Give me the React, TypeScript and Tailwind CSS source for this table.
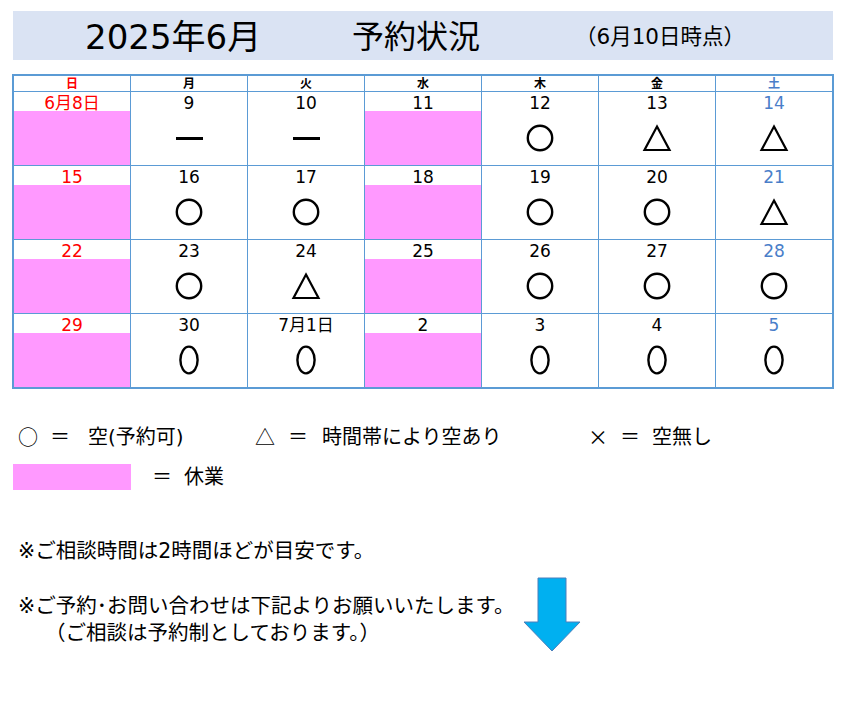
import React from "react";

type Sym = "o" | "t" | "d" | "oo" | "";
type Cell = { label: string; sym: Sym; closed?: boolean };

const weeks: Cell[][] = [
  [
    { label: "6月8日", sym: "", closed: true },
    { label: "9", sym: "d" },
    { label: "10", sym: "d" },
    { label: "11", sym: "", closed: true },
    { label: "12", sym: "o" },
    { label: "13", sym: "t" },
    { label: "14", sym: "t" },
  ],
  [
    { label: "15", sym: "", closed: true },
    { label: "16", sym: "o" },
    { label: "17", sym: "o" },
    { label: "18", sym: "", closed: true },
    { label: "19", sym: "o" },
    { label: "20", sym: "o" },
    { label: "21", sym: "t" },
  ],
  [
    { label: "22", sym: "", closed: true },
    { label: "23", sym: "o" },
    { label: "24", sym: "t" },
    { label: "25", sym: "", closed: true },
    { label: "26", sym: "o" },
    { label: "27", sym: "o" },
    { label: "28", sym: "o" },
  ],
  [
    { label: "29", sym: "", closed: true },
    { label: "30", sym: "oo" },
    { label: "7月1日", sym: "oo" },
    { label: "2", sym: "", closed: true },
    { label: "3", sym: "oo" },
    { label: "4", sym: "oo" },
    { label: "5", sym: "oo" },
  ],
];

const days = ["日", "月", "火", "水", "木", "金", "土"];

function Symbol({ s }: { s: Sym }) {
  if (s === "o")
    return (
      <svg width="30" height="30" viewBox="0 0 30 30">
        <circle cx="15" cy="15" r="12.2" fill="none" stroke="#000" strokeWidth="2.4" />
      </svg>
    );
  if (s === "oo")
    return (
      <svg width="24" height="32" viewBox="0 0 24 32">
        <ellipse cx="12" cy="16" rx="8.6" ry="13.4" fill="none" stroke="#000" strokeWidth="2.4" />
      </svg>
    );
  if (s === "t")
    return (
      <svg width="30" height="30" viewBox="0 0 30 30">
        <path d="M15 3.5 L27.5 27 L2.5 27 Z" fill="none" stroke="#000" strokeWidth="2.2" strokeLinejoin="miter" />
      </svg>
    );
  if (s === "d") return <div className="w-[27px] h-[3px] bg-black" />;
  return null;
}

function colorFor(i: number) {
  if (i === 0) return "text-[#ff0000]";
  if (i === 6) return "text-[#4a7ec9]";
  return "text-black";
}

const cjk = { fontFamily: '"Noto Sans CJK JP", sans-serif' };

export default function App() {
  const font = { fontFamily: '"DejaVu Sans", "Noto Sans CJK JP", sans-serif' };
  return (
    <div className="w-[844px] h-[713px] bg-white relative" style={font}>
      <div className="pt-[11px] pl-[13px]">
        <div className="w-[820px] h-[49px] bg-[#dae3f3] flex items-center text-black">
          <span className="ml-[72px] w-[267px] text-[34px] leading-none pt-[2px]">2025年6月</span>
          <span className="w-[223px] text-[32px] leading-none pt-[2px]">予約状況</span>
          <span className="text-[21.5px] leading-none pt-[2px]">（6月10日時点）</span>
        </div>
      </div>

      <div className="ml-[12px] mt-[14px] w-[822px] border-2 border-[#5b9bd5] bg-[#5b9bd5] grid grid-cols-7 gap-px">
        {days.map((d, i) => (
          <div
            key={d}
            className={`bg-white h-[15px] flex items-center justify-center text-[12px] font-bold leading-none ${colorFor(i)}`}
          >
            {d}
          </div>
        ))}
        {weeks.map((w, wi) =>
          w.map((c, i) => (
            <div key={`${wi}-${i}`} className="bg-white h-[73px] flex flex-col">
              <div className={`h-[19px] pt-[3px] flex items-center justify-center text-[17px] leading-none ${colorFor(i)}`}>
                {c.label}
              </div>
              <div className={`flex-1 flex items-center justify-center ${c.closed ? "bg-[#ff99ff]" : ""}`}>
                <Symbol s={c.sym} />
              </div>
            </div>
          ))
        )}
      </div>

      <div className="mt-[38px] ml-[18px] flex items-center text-[20px] leading-none text-black">
        <span className="w-[32px]" style={cjk}>○</span>
        <span className="w-[38px]">＝</span>
        <span className="w-[167px]">空(予約可)</span>
        <span className="w-[33px]" style={cjk}>△</span>
        <span className="w-[34px]">＝</span>
        <span className="w-[266px]">時間帯により空あり</span>
        <span className="w-[32px]" style={cjk}>×</span>
        <span className="w-[32px]">＝</span>
        <span>空無し</span>
      </div>
      <div className="mt-[17px] ml-[13px] flex items-center text-[20px] leading-none text-black">
        <div className="w-[118px] h-[26px] bg-[#ff99ff]" />
        <span className="ml-[21px] w-[32px]">＝</span>
        <span>休業</span>
      </div>

      <div className="mt-[51px] ml-[18px] text-[20.5px] leading-none text-black">
        ※ご相談時間は2時間ほどが目安です。
      </div>
      <div className="mt-[31px] ml-[18px] flex text-[20.5px] text-black">
        <div className="w-[505px] leading-[27px] whitespace-nowrap">
          <div>※ご予約･お問い合わせは下記よりお願いいたします。</div>
          <div className="ml-[27px]">（ご相談は予約制としております。）</div>
        </div>
        <svg className="-mt-[16px] shrink-0" width="58" height="76" viewBox="0 0 58 76">
          <path d="M15 1 L43 1 L43 45 L57 45 L29 74 L1 45 L15 45 Z" fill="#00b0f0" stroke="#4a7ebb" strokeWidth="1" />
        </svg>
      </div>
    </div>
  );
}
